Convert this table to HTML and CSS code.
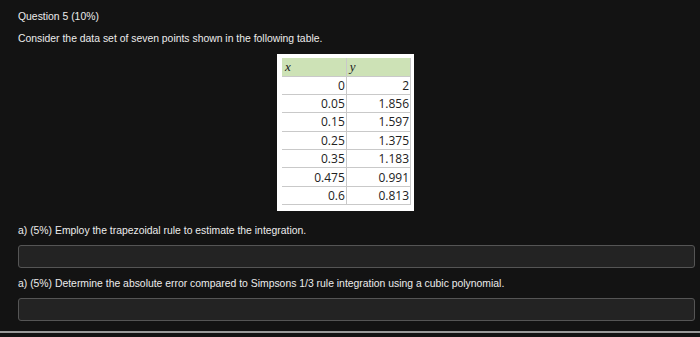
FILE: index.html
```html
<!DOCTYPE html>
<html>
<head>
<meta charset="utf-8">
<link rel="stylesheet" href="styles.css">
</head>
<body>
<div class="question">
  <p class="title">Question 5 (10%)</p>
  <p class="intro">Consider the data set of seven points shown in the following table.</p>
  <div class="figure">
    <div class="sheet">
      <table class="data">
        <thead>
          <tr><th><i>x</i></th><th><i>y</i></th></tr>
        </thead>
        <tbody>
          <tr><td>0</td><td>2</td></tr>
          <tr><td>0.05</td><td>1.856</td></tr>
          <tr><td>0.15</td><td>1.597</td></tr>
          <tr><td>0.25</td><td>1.375</td></tr>
          <tr><td>0.35</td><td>1.183</td></tr>
          <tr><td>0.475</td><td>0.991</td></tr>
          <tr><td>0.6</td><td>0.813</td></tr>
        </tbody>
      </table>
    </div>
  </div>
  <p class="part part-a">a) (5%) Employ the trapezoidal rule to estimate the integration.</p>
  <div class="answer"></div>
  <p class="part part-b">a) (5%) Determine the absolute error compared to Simpsons 1/3 rule integration using a cubic polynomial.</p>
  <div class="answer"></div>
</div>
<div class="rule"></div>
</body>
</html>
```

FILE: styles.css
```css
html, body {
  margin: 0;
  padding: 0;
  background: #131313;
}

body {
  width: 700px;
  height: 337px;
  overflow: hidden;
  font-family: "Liberation Sans", Arial, sans-serif;
  font-size: 10.4px;
  color: #ececec;
}

.question {
  padding: 10px 6px 0 18px;
}

.question p {
  margin: 0;
  line-height: 13px;
}

.intro {
  margin-top: 9px !important;
}

.figure {
  display: flex;
  padding-left: 259px;
  margin-top: 9px;
}

.sheet {
  background: #ffffff;
  padding: 4px 3px 6px 5px;
}

.data {
  border-collapse: collapse;
  table-layout: fixed;
  width: 129px;
  font-family: "Open Sans", "Noto Sans", sans-serif;
  font-size: 12px;
  color: #222;
}

.data th,
.data td {
  width: 64px;
  box-sizing: border-box;
}

.data th {
  background: #cde2b6;
  height: 18px;
  padding: 0 3px;
  text-align: left;
  font-family: "Liberation Serif", serif;
  font-size: 13px;
  font-weight: normal;
  line-height: 17px;
  border-right: 1px solid #c9c9c9;
  border-bottom: 1px solid #c9c9c9;
}

.data td {
  height: 18.4px;
  padding: 0 1px 0 0;
  text-align: right;
  border-right: 1px solid #c9c9c9;
  border-bottom: 1px solid #c9c9c9;
  line-height: 17px;
}

.part-a {
  margin-top: 13px !important;
}

.part-b {
  margin-top: 9px !important;
}

.answer {
  margin-top: 8px;
  height: 21px;
  width: 675px;
  border: 1px solid #555;
  border-radius: 3px;
  background: #232323;
}

.rule {
  margin-top: 10px;
  height: 2px;
  background: #9a9a9a;
}
```
